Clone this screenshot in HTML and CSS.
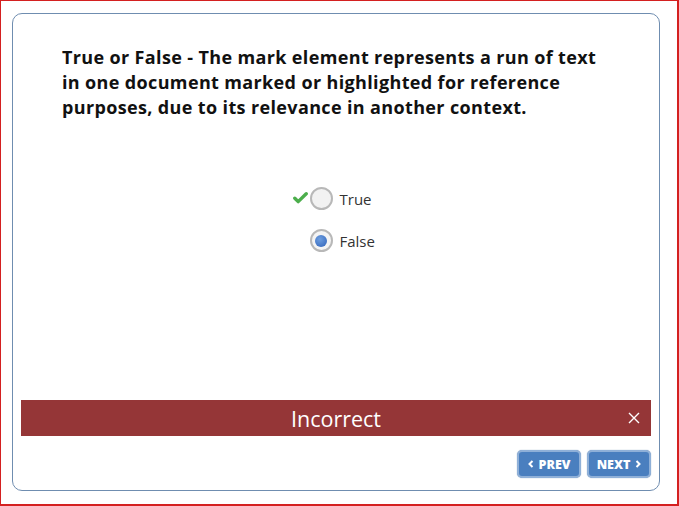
FILE: index.html
```html
<!DOCTYPE html>
<html>
<head>
<meta charset="utf-8">
<link rel="stylesheet" href="styles.css">
</head>
<body>
<div class="frame">
  <div class="card">
    <p class="question">True or False - The mark element represents a run of text in one document marked or highlighted for reference purposes, due to its relevance in another context.</p>
    <div class="options">
      <label class="option">
        <span class="mark"><svg width="15" height="12" viewBox="0 0 15 12"><path d="M1.8 6.2 L5.2 9.6 L13.2 1.8" fill="none" stroke="#4cae4c" stroke-width="3.4" stroke-linecap="round" stroke-linejoin="round"/></svg></span>
        <span class="radio"></span>
        <span class="label">True</span>
      </label>
      <label class="option">
        <span class="mark"></span>
        <span class="radio checked"><span class="dot"></span></span>
        <span class="label">False</span>
      </label>
    </div>
    <div class="banner">
      <span class="banner-text">Incorrect</span>
      <svg class="close" width="12" height="12" viewBox="0 0 12 12"><path d="M1 1 L11 11 M11 1 L1 11" stroke="#fff" stroke-width="1.4" fill="none"/></svg>
    </div>
    <div class="nav">
      <button class="btn"><svg class="chev" width="6" height="8" viewBox="0 0 6 8"><path d="M4.5 1 L1.5 4 L4.5 7" stroke="#fff" stroke-width="2" fill="none"/></svg>PREV</button>
      <button class="btn">NEXT<svg class="chev next" width="6" height="8" viewBox="0 0 6 8"><path d="M1.5 1 L4.5 4 L1.5 7" stroke="#fff" stroke-width="2" fill="none"/></svg></button>
    </div>
  </div>
</div>
</body>
</html>
```
FILE: styles.css
```css
* { box-sizing: border-box; }
html, body { margin: 0; padding: 0; background: #fff; }
body { font-family: "Open Sans", "Liberation Sans", sans-serif; }
.frame {
  width: 679px;
  height: 506px;
  border: 1px solid #d42020;
  border-right-width: 2px;
  border-bottom-width: 2px;
  padding: 12px 17px 13px 11px;
}
.card {
  height: 478px;
  border: 1px solid #6f8db0;
  border-radius: 10px;
  display: flex;
  flex-direction: column;
  padding: 0 8px;
}
.question {
  margin: 31px 0 0 41px;
  width: 548px;
  font-size: 18px;
  letter-spacing: 0.36px;
  font-weight: 700;
  line-height: 25px;
  color: #111;
}
.options {
  margin-top: 67px;
  display: flex;
  flex-direction: column;
  align-items: center;
  gap: 19px;
  padding-right: 2px;
}
.option {
  display: flex;
  align-items: center;
  height: 23px;
}
.mark {
  width: 19px;
  display: flex;
  align-items: center;
  justify-content: flex-start;
  margin-top: -2px;
  padding-left: 2px;
}
.radio {
  width: 23px;
  height: 23px;
  border-radius: 50%;
  border: 2px solid #b8b8b8;
  background: #f2f2f2;
  display: flex;
  align-items: center;
  justify-content: center;
}
.radio.checked { background: #f4f4f4; }
.dot {
  width: 12px;
  height: 12px;
  border-radius: 50%;
  background: radial-gradient(circle at 40% 35%, #6d9ee0, #2f62b8);
}
.label {
  margin-left: 7px;
  font-size: 15px;
  color: #333;
  width: 40px;
}
.banner {
  margin-top: auto;
  height: 36px;
  background: #953637;
  color: #fff;
  display: flex;
  align-items: center;
  justify-content: center;
  position: relative;
}
.banner-text { font-size: 21.5px; }
.close {
  position: absolute;
  right: 11px;
  top: 12px;
}
.nav {
  display: flex;
  justify-content: flex-end;
  gap: 6px;
  padding: 14px 0 12px;
}
.btn {
  width: 64px;
  height: 28px;
  border: 2px solid #8fb0d8;
  border-radius: 5px;
  background: #4a7fbf;
  color: #fff;
  font-family: "Open Sans", "Liberation Sans", sans-serif;
  font-weight: 800;
  font-size: 12.5px;
  padding: 0;
  display: flex;
  align-items: center;
  justify-content: center;
  gap: 5px;
  box-shadow: 0 0 1px #6a8ab0;
}
```
